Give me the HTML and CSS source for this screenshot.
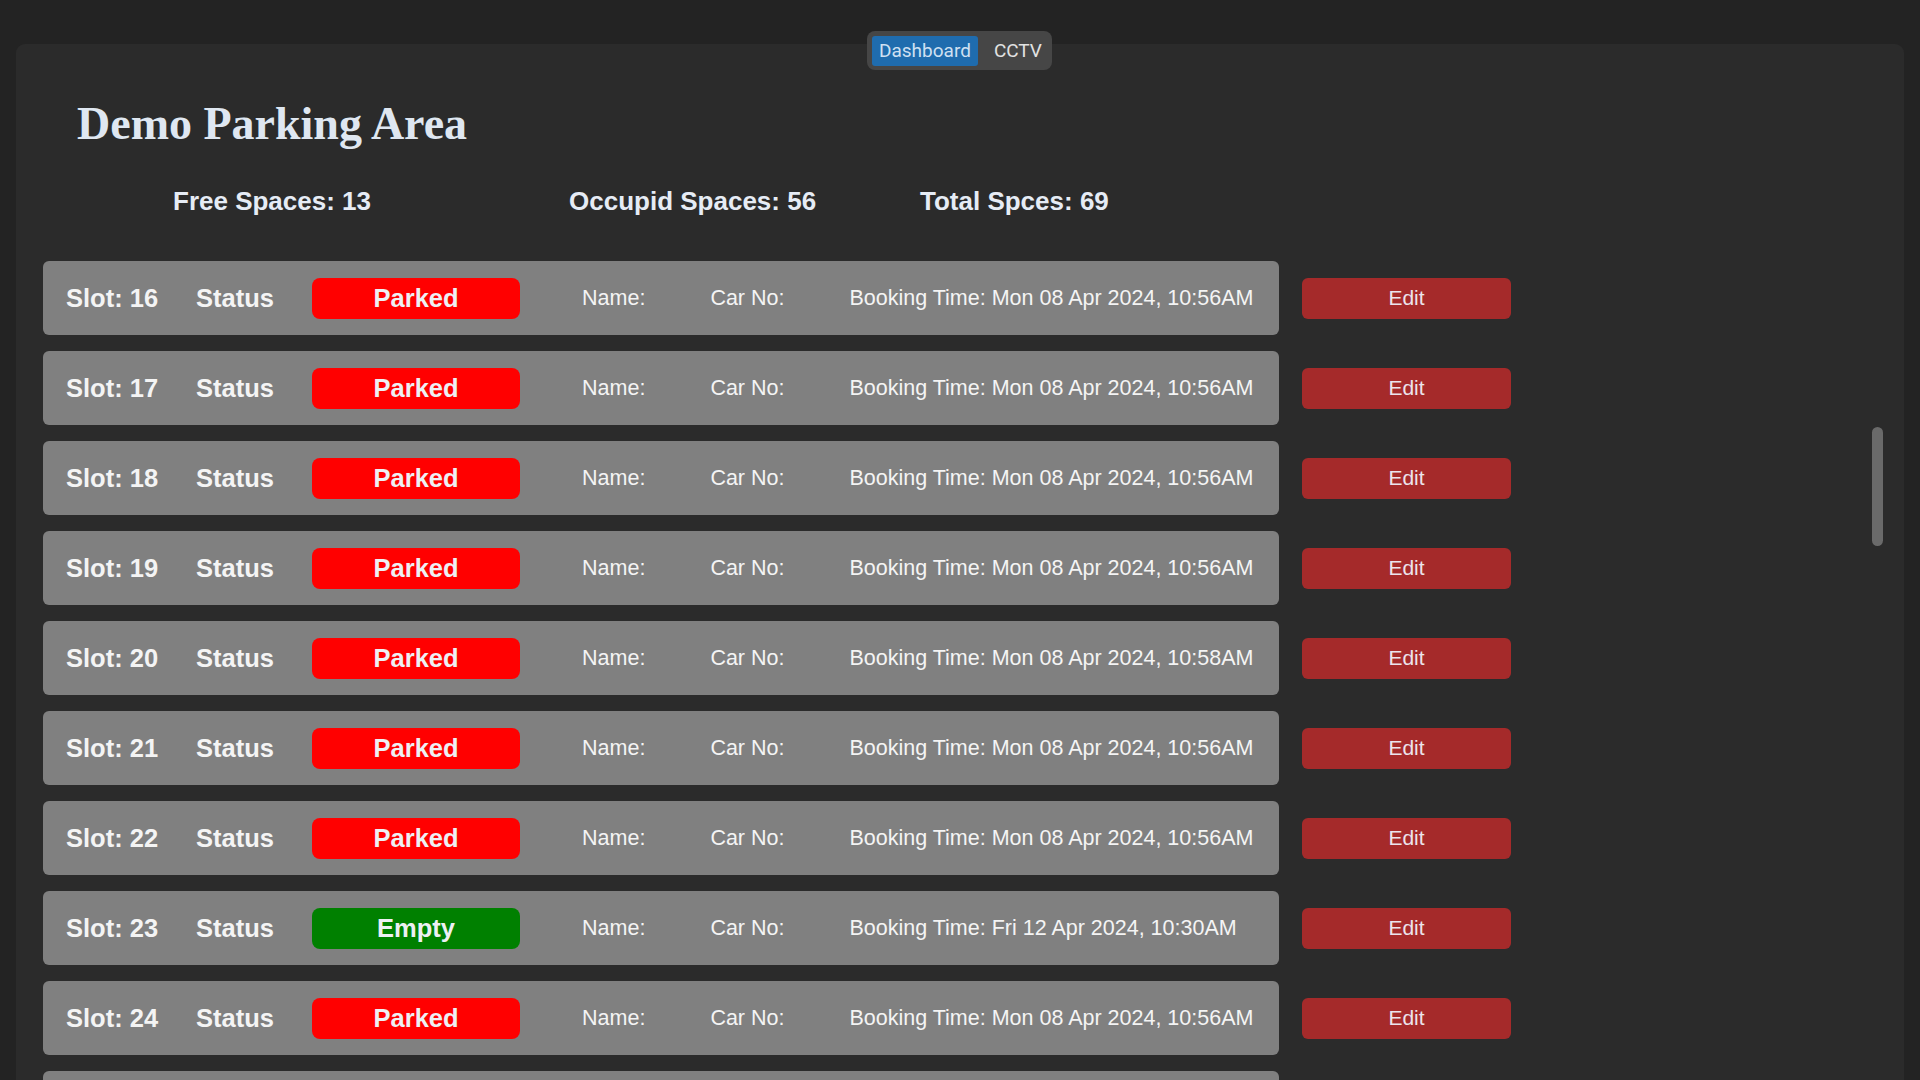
FILE: index.html
```html
<!DOCTYPE html>
<html lang="en">
<head>
<meta charset="utf-8">
<title>Demo Parking Area</title>
<link rel="stylesheet" href="styles.css">
</head>
<body>
<nav class="tabs">
  <button class="tab tab-active">Dashboard</button>
  <button class="tab">CCTV</button>
</nav>
<div class="panel">
  <main class="content">
    <h1 class="title">Demo Parking Area</h1>
    <div class="stats">
      <div class="stat">Free Spaces: 13</div>
      <div class="stat">Occupid Spaces: 56</div>
      <div class="stat">Total Spces: 69</div>
    </div>
    <ul class="slots">
      <li class="slot-line"><div class="slot"><span class="slot-no">Slot: 16</span><span class="status-label">Status</span><span class="badge badge-parked">Parked</span><span class="name">Name:</span><span class="car">Car No:</span><span class="time">Booking Time: Mon 08 Apr 2024, 10:56AM</span></div><button class="edit">Edit</button></li>
      <li class="slot-line"><div class="slot"><span class="slot-no">Slot: 17</span><span class="status-label">Status</span><span class="badge badge-parked">Parked</span><span class="name">Name:</span><span class="car">Car No:</span><span class="time">Booking Time: Mon 08 Apr 2024, 10:56AM</span></div><button class="edit">Edit</button></li>
      <li class="slot-line"><div class="slot"><span class="slot-no">Slot: 18</span><span class="status-label">Status</span><span class="badge badge-parked">Parked</span><span class="name">Name:</span><span class="car">Car No:</span><span class="time">Booking Time: Mon 08 Apr 2024, 10:56AM</span></div><button class="edit">Edit</button></li>
      <li class="slot-line"><div class="slot"><span class="slot-no">Slot: 19</span><span class="status-label">Status</span><span class="badge badge-parked">Parked</span><span class="name">Name:</span><span class="car">Car No:</span><span class="time">Booking Time: Mon 08 Apr 2024, 10:56AM</span></div><button class="edit">Edit</button></li>
      <li class="slot-line"><div class="slot"><span class="slot-no">Slot: 20</span><span class="status-label">Status</span><span class="badge badge-parked">Parked</span><span class="name">Name:</span><span class="car">Car No:</span><span class="time">Booking Time: Mon 08 Apr 2024, 10:58AM</span></div><button class="edit">Edit</button></li>
      <li class="slot-line"><div class="slot"><span class="slot-no">Slot: 21</span><span class="status-label">Status</span><span class="badge badge-parked">Parked</span><span class="name">Name:</span><span class="car">Car No:</span><span class="time">Booking Time: Mon 08 Apr 2024, 10:56AM</span></div><button class="edit">Edit</button></li>
      <li class="slot-line"><div class="slot"><span class="slot-no">Slot: 22</span><span class="status-label">Status</span><span class="badge badge-parked">Parked</span><span class="name">Name:</span><span class="car">Car No:</span><span class="time">Booking Time: Mon 08 Apr 2024, 10:56AM</span></div><button class="edit">Edit</button></li>
      <li class="slot-line"><div class="slot"><span class="slot-no">Slot: 23</span><span class="status-label">Status</span><span class="badge badge-empty">Empty</span><span class="name">Name:</span><span class="car">Car No:</span><span class="time">Booking Time: Fri 12 Apr 2024, 10:30AM</span></div><button class="edit">Edit</button></li>
      <li class="slot-line"><div class="slot"><span class="slot-no">Slot: 24</span><span class="status-label">Status</span><span class="badge badge-parked">Parked</span><span class="name">Name:</span><span class="car">Car No:</span><span class="time">Booking Time: Mon 08 Apr 2024, 10:56AM</span></div><button class="edit">Edit</button></li>
      <li class="slot-line"><div class="slot slot-next"></div></li>
    </ul>
  </main>
  <div class="track"><div class="thumb"></div></div>
</div>
</body>
</html>
```
FILE: styles.css
```css
html, body {
  margin: 0;
  padding: 0;
  height: 100%;
  overflow: hidden;
}
body {
  background: #232323;
  font-family: "Liberation Sans", Arial, sans-serif;
  color: #e8edf4;
  padding: 44px 16px 0 16px;
  box-sizing: border-box;
}
.tabs {
  position: absolute;
  top: 31px;
  left: 867px;
  width: 185px;
  height: 39px;
  box-sizing: border-box;
  background: #464646;
  border-radius: 8px;
  padding: 0 5px;
  display: flex;
  align-items: center;
  gap: 9px;
  z-index: 2;
}
.tab {
  font-family: Roboto, "Noto Sans", sans-serif;
  font-size: 19px;
  line-height: 30px;
  height: 30px;
  padding: 0 7px;
  border: 0;
  border-radius: 3px;
  background: transparent;
  color: #e2e2e2;
  cursor: pointer;
}
.tab-active {
  background: #1f6cae;
  color: #cfe0f2;
}
.panel {
  height: 1100px;
  background: #2b2b2b;
  border-radius: 9px;
  display: flex;
  overflow: hidden;
}
.content {
  flex: 1;
  padding: 56px 0 0 27px;
}
.title {
  margin: 0 0 0 34px;
  font-family: "Liberation Serif", "Times New Roman", serif;
  font-weight: bold;
  font-size: 46px;
  line-height: 47px;
  color: #dfe7f1;
}
.stats {
  display: grid;
  grid-template-columns: 396px 351px auto;
  margin: 39px 0 0 130px;
  font-size: 26px;
  font-weight: bold;
  line-height: 30px;
  color: #e6ecf5;
}
.slots {
  list-style: none;
  margin: 45px 0 0 0;
  padding: 0;
  display: flex;
  flex-direction: column;
  gap: 16px;
}
.slot-line {
  display: flex;
  align-items: center;
}
.slot {
  width: 1236px;
  height: 74px;
  box-sizing: border-box;
  background: #808080;
  border-radius: 6px;
  display: flex;
  align-items: center;
  padding: 0 23px;
  color: #f4f4f4;
}
.slot-no, .status-label {
  font-size: 25.5px;
  font-weight: bold;
  margin-right: 38px;
  white-space: nowrap;
}
.badge {
  width: 208px;
  height: 41px;
  border-radius: 8px;
  display: flex;
  align-items: center;
  justify-content: center;
  font-size: 25.5px;
  font-weight: bold;
  color: #eef0f4;
}
.badge-parked { background: #ff0000; }
.badge-empty { background: #008000; }
.name, .car, .time {
  font-size: 21.5px;
  white-space: nowrap;
}
.name { margin-left: 62px; }
.car { margin-left: 65px; }
.time { margin-left: 65px; }
.edit {
  margin-left: 23px;
  width: 209px;
  height: 41px;
  border: 0;
  border-radius: 6px;
  background: #a52a2a;
  color: #ece4ec;
  font-family: "Liberation Sans", Arial, sans-serif;
  font-size: 21px;
  cursor: pointer;
}
.track {
  width: 11px;
  margin-right: 21px;
  flex: none;
}
.thumb {
  margin-top: 383px;
  height: 119px;
  background: #6a6a6a;
  border-radius: 6px;
}
```
